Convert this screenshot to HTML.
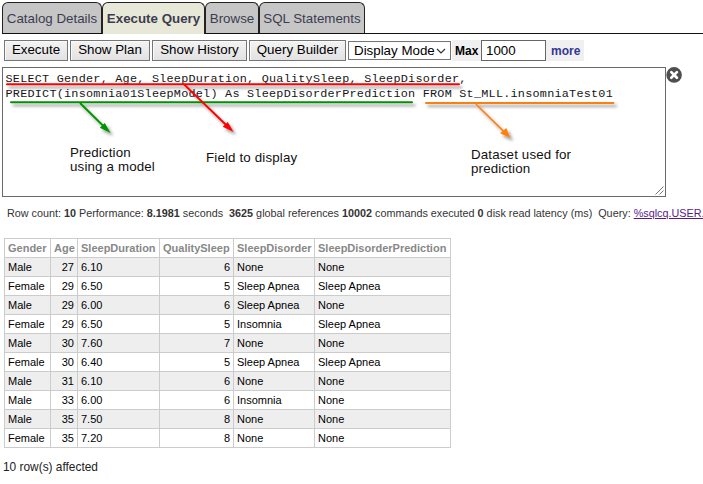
<!DOCTYPE html>
<html><head><meta charset="utf-8">
<style>
html,body{margin:0;padding:0;background:#fff;}
body{width:703px;height:484px;overflow:hidden;position:relative;font-family:"Liberation Sans",Arial,sans-serif;color:#000;}
.abs{position:absolute;}
.tab{position:absolute;top:2px;height:31px;box-sizing:border-box;border:1px solid #222;border-bottom:none;border-radius:6px 6px 0 0;background:#c6c6c6;font-size:13.33px;line-height:31px;color:#3c3c50;text-align:center;white-space:nowrap;}
.tab.sel{background:#e8e8d8;font-weight:bold;color:#3c3c50;}
.btn{position:absolute;top:40px;height:21px;box-sizing:border-box;border:1px solid #767676;font-size:13.33px;line-height:18px;text-align:center;background:linear-gradient(#f3f3f3,#e2e2e2);box-shadow:inset 1px 1px 0 #fafafa;white-space:nowrap;color:#000;}
.mono{font-family:"Liberation Mono","DejaVu Sans Mono",monospace;font-size:11.8px;letter-spacing:0.24px;white-space:pre;}
.note{position:absolute;font-size:13.33px;letter-spacing:0.15px;line-height:14px;white-space:nowrap;color:#111;}
table{border-collapse:collapse;position:absolute;left:4px;top:238px;font-size:11px;table-layout:fixed;width:447px;}
td,th{border:1px solid #ccc;height:19px;padding:0 3px;text-align:left;white-space:nowrap;box-sizing:border-box;}
th{color:#888;font-weight:bold;font-size:11px;}
tr.o td{background:#eee;}
td.r{text-align:right;}
</style></head><body>
<div class="abs" style="left:2px;top:33px;width:701px;height:1px;background:#111;"></div>
<div class="tab" style="left:2px;width:100px;">Catalog Details</div>
<div class="tab sel" style="left:102px;width:103px;height:32px;">Execute Query</div>
<div class="tab" style="left:205px;width:54px;">Browse</div>
<div class="tab" style="left:259px;width:106px;">SQL Statements</div>

<div class="btn" style="left:4px;width:64px;">Execute</div>
<div class="btn" style="left:70px;width:80px;">Show Plan</div>
<div class="btn" style="left:152px;width:95px;">Show History</div>
<div class="btn" style="left:249px;width:97px;">Query Builder</div>
<div class="btn" style="left:348px;top:41px;width:103px;height:19px;line-height:17px;background:#fff;border-color:#767676;text-align:left;padding-left:5px;">Display Mode <svg width="10" height="6" viewBox="0 0 10 6" style="position:absolute;right:4px;top:6px;"><path d="M1 1 L5 5 L9 1" fill="none" stroke="#333" stroke-width="1.2"/></svg></div>
<div class="abs" style="left:452px;top:40px;width:132px;height:21px;background:#f0f0f0;"></div>
<div class="abs" style="left:455px;top:43px;font-size:12px;font-weight:bold;line-height:16px;">Max</div>
<div class="abs" style="left:481px;top:40px;width:65px;height:21px;box-sizing:border-box;border:1px solid #666;background:#fff;font-size:13.33px;line-height:19px;padding-left:4px;">1000</div>
<div class="abs" style="left:551px;top:43px;font-size:12px;font-weight:bold;color:#333695;line-height:16px;">more</div>

<div class="abs" style="left:2px;top:67px;width:664px;height:130px;box-sizing:border-box;border:1px solid #6a6a6a;background:#fff;"></div>
<div class="abs mono" style="left:5.500px;top:72px;line-height:15px;color:#161616;">SELECT Gender, Age, SleepDuration, QualitySleep, SleepDisorder,
PREDICT(insomnia01SleepModel) As SleepDisorderPrediction FROM St_MLL.insomniaTest01</div>
<svg class="abs" style="left:0;top:0;" width="703" height="484" viewBox="0 0 703 484">
  <defs><filter id="sh" x="-5%" y="-20%" width="110%" height="150%"><feDropShadow dx="2.500" dy="3" stdDeviation="1.600" flood-color="#000" flood-opacity="0.400"/></filter></defs>
  <g filter="url(#sh)">
  <line x1="7" y1="84.200" x2="459" y2="84.200" stroke="#ff0000" stroke-width="2" stroke-linecap="round"/>
  <line x1="11" y1="102.300" x2="412" y2="102.300" stroke="#029202" stroke-width="2" stroke-linecap="round"/>
  <line x1="426" y1="103.100" x2="613.500" y2="103.100" stroke="#ff7f0e" stroke-width="2" stroke-linecap="round"/>
  <line x1="80" y1="103" x2="105" y2="127.600" stroke="#029202" stroke-width="2"/>
  <polygon points="110.600,133.100 99.800,127.700 104.800,123" fill="#029202"/>
  <line x1="184" y1="84.400" x2="228" y2="126.700" stroke="#ff0000" stroke-width="2"/>
  <polygon points="233.600,132.100 222.700,126.700 227.800,122" fill="#ff0000"/>
  <line x1="475.800" y1="104" x2="505" y2="132.600" stroke="#ff7f0e" stroke-width="1.6"/>
  <polygon points="510.400,137.900 500.100,133.200 506.300,128" fill="#ff7f0e"/>
  </g>
  <path d="M655.500 194.500 L663.500 186.500 M659.500 194.500 L663.500 190.500" stroke="#777" stroke-width="1" fill="none"/>
  <circle cx="674.100" cy="74.900" r="7.800" fill="#4f4f4f"/>
  <path d="M671.300 72.100 L676.900 77.700 M676.900 72.100 L671.300 77.700" stroke="#fff" stroke-width="2.700" stroke-linecap="round"/>
</svg>
<div class="note" style="left:70px;top:146px;">Prediction<br>using a model</div>
<div class="note" style="left:206px;top:151px;">Field to display</div>
<div class="note" style="left:471px;top:148px;">Dataset used for<br>prediction</div>

<div class="abs" style="left:7px;top:206px;font-size:10.8px;line-height:14px;white-space:nowrap;color:#333;">Row count: <b>10</b> Performance: <b>8.1981</b> seconds&nbsp; <b>3625</b> global references <b>10002</b> commands executed <b>0</b> disk read latency (ms)&nbsp; Query: <span style="color:#551a8b;text-decoration:underline;">%sqlcq.USER.cls12</span></div>

<table>
<colgroup><col style="width:46px"><col style="width:27px"><col style="width:82px"><col style="width:74px"><col style="width:81px"><col style="width:136px"></colgroup>
<tr><th>Gender</th><th>Age</th><th>SleepDuration</th><th>QualitySleep</th><th>SleepDisorder</th><th>SleepDisorderPrediction</th></tr>
<tr class="o"><td>Male</td><td class="r">27</td><td>6.10</td><td class="r">6</td><td>None</td><td>None</td></tr>
<tr><td>Female</td><td class="r">29</td><td>6.50</td><td class="r">5</td><td>Sleep Apnea</td><td>Sleep Apnea</td></tr>
<tr class="o"><td>Male</td><td class="r">29</td><td>6.00</td><td class="r">6</td><td>Sleep Apnea</td><td>None</td></tr>
<tr><td>Female</td><td class="r">29</td><td>6.50</td><td class="r">5</td><td>Insomnia</td><td>Sleep Apnea</td></tr>
<tr class="o"><td>Male</td><td class="r">30</td><td>7.60</td><td class="r">7</td><td>None</td><td>None</td></tr>
<tr><td>Female</td><td class="r">30</td><td>6.40</td><td class="r">5</td><td>Sleep Apnea</td><td>Sleep Apnea</td></tr>
<tr class="o"><td>Male</td><td class="r">31</td><td>6.10</td><td class="r">6</td><td>None</td><td>None</td></tr>
<tr><td>Male</td><td class="r">33</td><td>6.00</td><td class="r">6</td><td>Insomnia</td><td>None</td></tr>
<tr class="o"><td>Male</td><td class="r">35</td><td>7.50</td><td class="r">8</td><td>None</td><td>None</td></tr>
<tr><td>Female</td><td class="r">35</td><td>7.20</td><td class="r">8</td><td>None</td><td>None</td></tr>
</table>
<div class="abs" style="left:3px;top:460px;font-size:11.9px;line-height:15px;color:#222;">10 row(s) affected</div>
</body></html>
